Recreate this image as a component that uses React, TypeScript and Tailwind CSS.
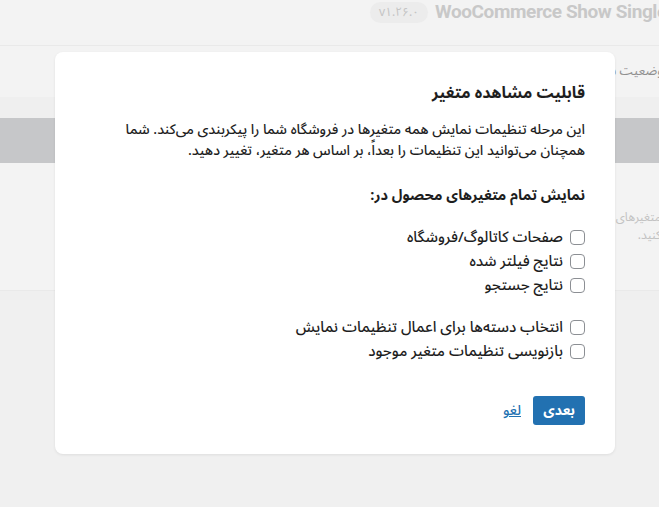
import React from 'react';

const font = "font-['Noto_Sans_Arabic','DejaVu_Sans','Noto_Sans',sans-serif]";

function Check({ label }: { label: string }) {
  return (
    <label className="flex items-center gap-[7px] h-[24px] text-[15px] font-medium text-[#1e1e1e]">
      <span className="w-[15px] h-[15px] rounded-[4px] border border-[#8c8f94] bg-white shrink-0" />
      <span>{label}</span>
    </label>
  );
}

export default function App() {
  return (
    <div className={`relative w-full h-[507px] overflow-hidden bg-[#f0f0f0] ${font}`}>
      {/* dimmed page behind the dialog */}
      <div className="h-[46px] bg-[#f3f3f3] border-b border-[#e9e9e9] flex items-start pl-[370px] whitespace-nowrap overflow-hidden">
        <span className="mt-[2px] h-[21px] px-[9px] rounded-full bg-[#ececec] text-[12px] leading-[21px] text-[#c4c4c4]">v۱.۲۶.۰</span>
        <span className="ml-[7px] text-[19px] leading-[24px] font-bold text-[#c8c8c8] font-['Roboto',sans-serif] tracking-[-0.4px]">WooCommerce Show Single Variations</span>
      </div>
      <div dir="rtl" className="h-[51px] bg-[#f3f3f3] flex items-center whitespace-nowrap overflow-hidden">
        <span className="-mr-[4px] text-[13px] text-[#8f8f8f]">وضعیت سازگاری</span>
      </div>
      <div className="h-[21px] bg-[#efefef]" />
      <div className="h-[45px] bg-[#c6c7c9]" />
      <div dir="rtl" className="h-[127px] bg-[#f3f3f3] flex items-center whitespace-nowrap overflow-hidden">
        <div className="-mr-[2px] text-[12px] leading-[18px] text-[#c2c2c2]">
          متغیرهای<br />کنید.
        </div>
      </div>
      <div className="h-[10px] bg-[#efefef] border-t border-[#e9e9e9]" />

      {/* dialog */}
      <div
        dir="rtl"
        className="absolute left-[55px] top-[52px] w-[560px] h-[402px] bg-white rounded-[8px] shadow-[0_1px_3px_rgba(0,0,0,0.08)] px-[30px] pt-[28px]"
      >
        <h2 className="text-[16px] leading-[26px] font-bold text-[#1e1e1e]">قابلیت مشاهده متغیر</h2>
        <p className="mt-[13px] text-[14px] leading-[21px] font-medium text-[#1e1e1e]">
          این مرحله تنظیمات نمایش همه متغیرها در فروشگاه شما را پیکربندی می‌کند. شما
          <br />
          همچنان می‌توانید این تنظیمات را بعداً، بر اساس هر متغیر، تغییر دهید.
        </p>
        <h3 className="mt-[23px] text-[14.5px] leading-[24px] font-bold text-[#1e1e1e]">نمایش تمام متغیرهای محصول در:</h3>
        <div className="mt-[17px] flex flex-col">
          <Check label="صفحات کاتالوگ/فروشگاه" />
          <Check label="نتایج فیلتر شده" />
          <Check label="نتایج جستجو" />
        </div>
        <div className="mt-[18px] flex flex-col">
          <Check label="انتخاب دسته‌ها برای اعمال تنظیمات نمایش" />
          <Check label="بازنویسی تنظیمات متغیر موجود" />
        </div>
        <div className="mt-[33px] flex items-center gap-[12px]">
          <button className="h-[29px] w-[52px] rounded-[3px] bg-[#2271b1] text-white text-[14px] font-bold">بعدی</button>
          <a className="text-[14px] font-medium text-[#2271b1] underline">لغو</a>
        </div>
      </div>
    </div>
  );
}
